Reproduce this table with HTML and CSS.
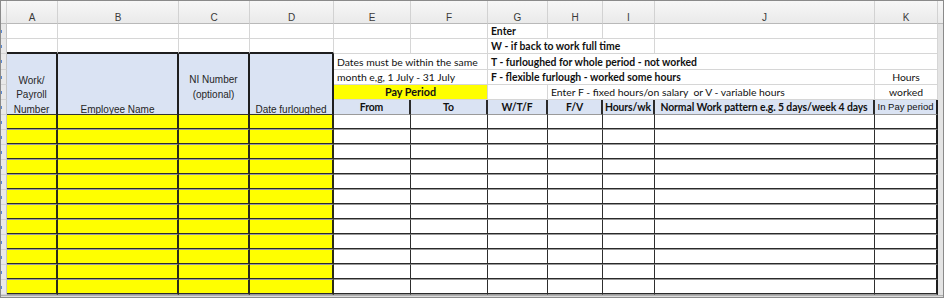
FILE: index.html
```html
<!DOCTYPE html>
<html lang="en">
<head>
<meta charset="utf-8">
<title>Furlough hours</title>
<link rel="stylesheet" href="styles.css">
</head>
<body>
<div class="window">
  <div class="sheet">
    <!-- column letters -->
    <div class="ch"></div>
    <div class="ch">A</div>
    <div class="ch">B</div>
    <div class="ch">C</div>
    <div class="ch">D</div>
    <div class="ch">E</div>
    <div class="ch">F</div>
    <div class="ch">G</div>
    <div class="ch">H</div>
    <div class="ch">I</div>
    <div class="ch">J</div>
    <div class="ch">K</div>
    <div class="ch edge"></div>

    <!-- row 1 -->
    <div class="rh"></div>
    <div class="c"></div>
    <div class="c"></div>
    <div class="c"></div>
    <div class="c"></div>
    <div class="c"></div>
    <div class="c"></div>
    <div class="c note strong">Enter</div>
    <div class="c"></div>
    <div class="c"></div>
    <div class="c"></div>
    <div class="c"></div>
    <div class="re"></div>

    <!-- row 2 -->
    <div class="rh"></div>
    <div class="c block-top"></div>
    <div class="c block-top"></div>
    <div class="c block-top"></div>
    <div class="c block-top"></div>
    <div class="c"></div>
    <div class="c"></div>
    <div class="c note strong span3">W - if back to work full time</div>
    <div class="c"></div>
    <div class="c"></div>
    <div class="re"></div>

    <!-- rows 3-6: column titles -->
    <div class="rh"></div>
    <div class="c title tall bottom"><span class="lines">Work/<br>Payroll<br>Number</span></div>
    <div class="c title tall bottom"><span class="lines">Employee Name</span></div>
    <div class="c title tall middle"><span class="lines">NI Number<br>(optional)</span></div>
    <div class="c title tall bottom"><span class="lines">Date furloughed</span></div>
    <div class="c note span2">Dates must be within the same</div>
    <div class="c note strong span4">T - furloughed for whole period - not worked</div>
    <div class="c"></div>
    <div class="re"></div>

    <div class="rh"></div>
    <div class="c note span2">month e,g, 1 July - 31 July</div>
    <div class="c note strong span4">F - flexible furlough - worked some hours</div>
    <div class="c note center">Hours</div>
    <div class="re"></div>

    <div class="rh"></div>
    <div class="c note strong center period span2">Pay Period</div>
    <div class="c"></div>
    <div class="c note span3">Enter F - fixed hours/on salary&nbsp; or V - variable hours</div>
    <div class="c note center">worked</div>
    <div class="re"></div>

    <div class="rh"></div>
    <div class="c head">From</div>
    <div class="c head">To</div>
    <div class="c head">W/T/F</div>
    <div class="c head">F/V</div>
    <div class="c head">Hours/wk</div>
    <div class="c head">Normal Work pattern e.g. 5 days/week 4 days</div>
    <div class="c head plain last">In Pay period</div>
    <div class="re"></div>

    <!-- entry rows -->
    <div class="rh"></div><div class="c in y"></div><div class="c in y"></div><div class="c in y"></div><div class="c in y"></div><div class="c in"></div><div class="c in"></div><div class="c in"></div><div class="c in"></div><div class="c in"></div><div class="c in"></div><div class="c in last"></div><div class="re"></div>
    <div class="rh"></div><div class="c in y"></div><div class="c in y"></div><div class="c in y"></div><div class="c in y"></div><div class="c in"></div><div class="c in"></div><div class="c in"></div><div class="c in"></div><div class="c in"></div><div class="c in"></div><div class="c in last"></div><div class="re"></div>
    <div class="rh"></div><div class="c in y"></div><div class="c in y"></div><div class="c in y"></div><div class="c in y"></div><div class="c in"></div><div class="c in"></div><div class="c in"></div><div class="c in"></div><div class="c in"></div><div class="c in"></div><div class="c in last"></div><div class="re"></div>
    <div class="rh"></div><div class="c in y"></div><div class="c in y"></div><div class="c in y"></div><div class="c in y"></div><div class="c in"></div><div class="c in"></div><div class="c in"></div><div class="c in"></div><div class="c in"></div><div class="c in"></div><div class="c in last"></div><div class="re"></div>
    <div class="rh"></div><div class="c in y"></div><div class="c in y"></div><div class="c in y"></div><div class="c in y"></div><div class="c in"></div><div class="c in"></div><div class="c in"></div><div class="c in"></div><div class="c in"></div><div class="c in"></div><div class="c in last"></div><div class="re"></div>
    <div class="rh"></div><div class="c in y"></div><div class="c in y"></div><div class="c in y"></div><div class="c in y"></div><div class="c in"></div><div class="c in"></div><div class="c in"></div><div class="c in"></div><div class="c in"></div><div class="c in"></div><div class="c in last"></div><div class="re"></div>
    <div class="rh"></div><div class="c in y"></div><div class="c in y"></div><div class="c in y"></div><div class="c in y"></div><div class="c in"></div><div class="c in"></div><div class="c in"></div><div class="c in"></div><div class="c in"></div><div class="c in"></div><div class="c in last"></div><div class="re"></div>
    <div class="rh"></div><div class="c in y"></div><div class="c in y"></div><div class="c in y"></div><div class="c in y"></div><div class="c in"></div><div class="c in"></div><div class="c in"></div><div class="c in"></div><div class="c in"></div><div class="c in"></div><div class="c in last"></div><div class="re"></div>
    <div class="rh"></div><div class="c in y"></div><div class="c in y"></div><div class="c in y"></div><div class="c in y"></div><div class="c in"></div><div class="c in"></div><div class="c in"></div><div class="c in"></div><div class="c in"></div><div class="c in"></div><div class="c in last"></div><div class="re"></div>
    <div class="rh"></div><div class="c in y"></div><div class="c in y"></div><div class="c in y"></div><div class="c in y"></div><div class="c in"></div><div class="c in"></div><div class="c in"></div><div class="c in"></div><div class="c in"></div><div class="c in"></div><div class="c in last"></div><div class="re"></div>
    <div class="rh"></div><div class="c in y"></div><div class="c in y"></div><div class="c in y"></div><div class="c in y"></div><div class="c in"></div><div class="c in"></div><div class="c in"></div><div class="c in"></div><div class="c in"></div><div class="c in"></div><div class="c in last"></div><div class="re"></div>
    <div class="rh"></div><div class="c in y"></div><div class="c in y"></div><div class="c in y"></div><div class="c in y"></div><div class="c in"></div><div class="c in"></div><div class="c in"></div><div class="c in"></div><div class="c in"></div><div class="c in"></div><div class="c in last"></div><div class="re"></div>

    <div class="foot"></div>
  </div>
</div>
</body>
</html>
```

FILE: styles.css
```css
* {
  box-sizing: border-box;
  margin: 0;
  padding: 0;
}

body {
  margin: 0;
  background: #ffffff;
}

.window {
  width: 944px;
  height: 298px;
  border: 1px solid #8a8a8a;
  background: #e4e4e4;
}

.sheet {
  display: grid;
  grid-template-columns: 6px 51px 121px 71px 84px 77px 77px 60px 55px 52px 220px 63px 5px;
  grid-template-rows: 23px 15px 15px 16px 15px 15px 15px repeat(12, 15px) 2px;
  font-family: Lato, "Liberation Sans", sans-serif;
  font-size: 10.4px;
  color: #111;
}

/* column letters */
.ch {
  display: flex;
  align-items: center;
  justify-content: center;
  background: linear-gradient(#f7f7f7, #eaeaea);
  border-right: 1px solid #d2d2d2;
  border-bottom: 1px solid #b9b9b9;
  font-family: "Liberation Sans", Arial, sans-serif;
  font-size: 10px;
  color: #3a3a3a;
  padding-top: 11px;
}

.ch.edge {
  border-right: none;
}

/* row header strip (row numbers scrolled out of view) and right edge */
.rh {
  background: linear-gradient(#5b8ad4, #5b8ad4) no-repeat 0 6px / 1px 3px, #e9e9e9;
  border-right: 1px solid #c4c4c4;
  border-bottom: 1px solid #d4d4d4;
}

.re {
  background: #e4e4e4;
}

.foot {
  grid-column: 1 / -1;
  background: #dcdcdc;
  border-top: 1px solid #b0b0b0;
}

/* cells */
.c {
  display: flex;
  align-items: center;
  white-space: nowrap;
  overflow: hidden;
  background: #fff;
  border-right: 1px solid #d6d6d6;
  border-bottom: 1px solid #d6d6d6;
  line-height: 14px;
}

.span2 { grid-column: span 2; }
.span3 { grid-column: span 3; }
.span4 { grid-column: span 4; }

.block-top {
  border-bottom: 2px solid #1e1e1e;
}

.note {
  padding-left: 3px;
}

.strong {
  font-weight: 700;
  font-size: 10.4px;
}

.center {
  justify-content: center;
  padding-left: 0;
}

.period {
  background: #ffff00;
  font-size: 10.8px;
}

/* merged column titles over the yellow entry columns */
.title {
  grid-row: span 4;
  flex-direction: column;
  align-items: center;
  text-align: center;
  background: #dae3f3;
  border-right: 2px solid #1e1e1e;
  border-bottom: 1px solid #333;
  font-family: "Liberation Sans", Arial, sans-serif;
  font-size: 10px;
  line-height: 14.5px;
  color: #262626;
}

.lines {
  display: block;
}

.title.bottom {
  justify-content: flex-end;
}

.title.bottom .lines {
  margin-bottom: -3px;
}

.title.middle {
  justify-content: center;
  padding-top: 7px;
}

/* blue heading row */
.head {
  justify-content: center;
  background: #dae3f3;
  border-right: 2px solid #2a2a2a;
  border-bottom: 1px solid #9a9a9a;
  font-weight: 700;
  font-size: 10.4px;
  letter-spacing: -0.1px;
}

.head.plain {
  font-weight: 400;
  font-family: "Liberation Sans", Arial, sans-serif;
  font-size: 9.5px;
  letter-spacing: 0;
}

/* entry grid */
.in {
  border-right: 1px solid #2e2e2e;
  border-bottom: 1px solid #9a9a9a;
  box-shadow: inset 0 -1px 0 #2a2a2a;
}

.in.y {
  background: #ffff00;
  border-right: 2px solid #2b2b1a;
}

.last {
  border-right: 2px solid #1e1e1e;
}
```
